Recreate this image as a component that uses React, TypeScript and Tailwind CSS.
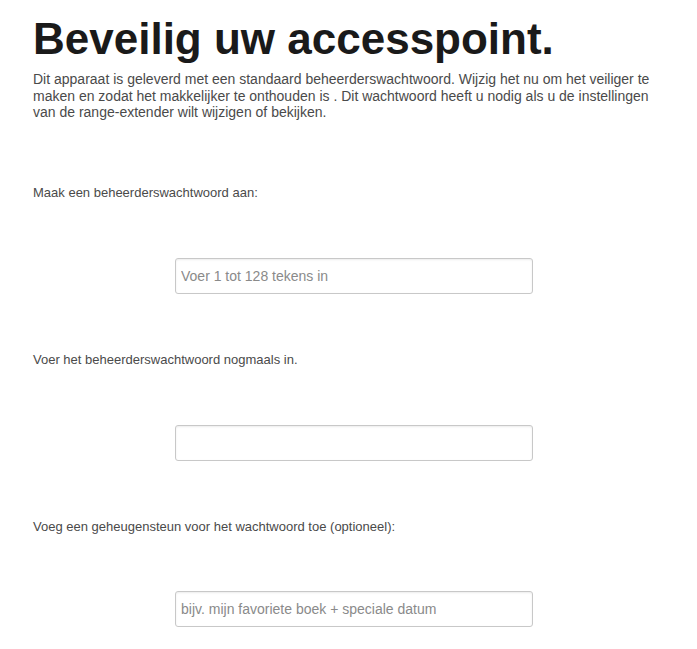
import React, { useState } from "react";

const inputCls =
  "h-9 w-[358px] rounded-[3px] border border-[#c8c8c8] bg-white px-[5px] text-[14px] text-[#333] shadow-[inset_0_1px_2px_rgba(0,0,0,0.08)] outline-none placeholder:text-[#8a8a8a]";

export default function App() {
  const [form, setForm] = useState({ password: "", confirm: "", hint: "" });
  const update = (k: string, v: string) => setForm((p) => ({ ...p, [k]: v }));

  return (
    <div className="min-h-screen bg-white px-[33px] pt-[13px] font-['Liberation_Sans',Arial,sans-serif]">
      <h1 className="text-[44px] font-bold leading-[52px] text-[#1a1a1a]">Beveilig uw accesspoint.</h1>
      <p className="mt-[6px] w-[640px] text-[14px] leading-[16.5px] text-[#4a4a4a]">
        Dit apparaat is geleverd met een standaard beheerderswachtwoord. Wijzig het nu om het veiliger te maken en zodat het makkelijker te onthouden is . Dit wachtwoord heeft u nodig als u de instellingen van de range-extender wilt wijzigen of bekijken.
      </p>

      <form className="mt-[64px]">
        <label className="block text-[13px] leading-[16px] text-[#4a4a4a]">Maak een beheerderswachtwoord aan:</label>
        <div className="mt-[57px] pl-[142px]">
          <input type="password" className={inputCls} placeholder="Voer 1 tot 128 tekens in" value={form.password} onChange={(e) => update("password", e.target.value)} />
        </div>

        <label className="mt-[58px] block text-[13px] leading-[16px] text-[#4a4a4a]">Voer het beheerderswachtwoord nogmaals in.</label>
        <div className="mt-[57px] pl-[142px]">
          <input type="password" className={inputCls} value={form.confirm} onChange={(e) => update("confirm", e.target.value)} />
        </div>

        <label className="mt-[58px] block text-[13px] leading-[16px] text-[#4a4a4a]">Voeg een geheugensteun voor het wachtwoord toe (optioneel):</label>
        <div className="mt-[56px] pl-[142px]">
          <input type="text" className={inputCls} placeholder="bijv. mijn favoriete boek + speciale datum" value={form.hint} onChange={(e) => update("hint", e.target.value)} />
        </div>
      </form>
    </div>
  );
}
